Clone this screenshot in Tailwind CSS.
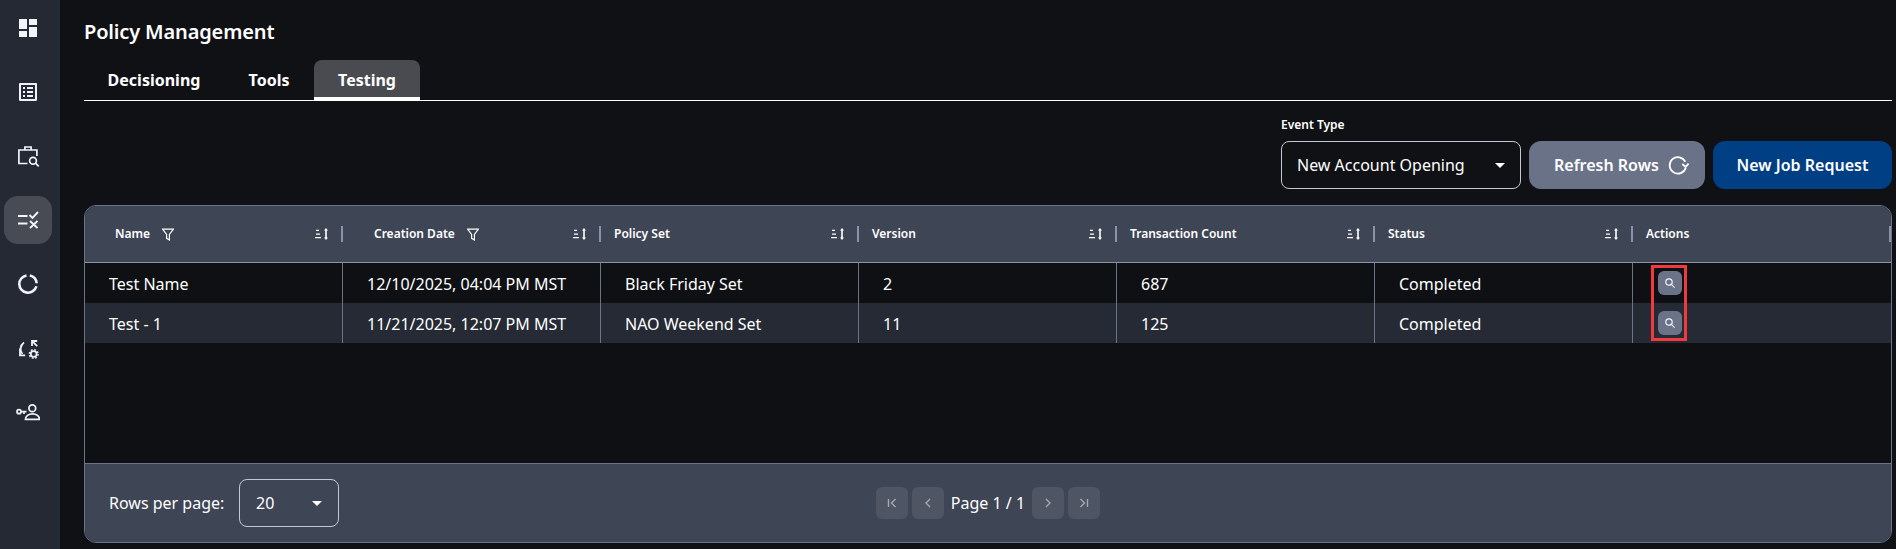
<!DOCTYPE html>
<html lang="en">

<head>
    <meta charset="UTF-8">
    <meta name="viewport" content="width=device-width, initial-scale=1.0">
    <title>Policy Management</title>
    <script src="https://cdn.jsdelivr.net/npm/@tailwindcss/browser@4"></script>
</head>

<body class="bg-[#101115] text-white font-['Noto_Sans',sans-serif] overflow-hidden">
    <div class="flex h-[549px]">
        <!-- Sidebar -->
        <nav class="w-[60px] shrink-0 bg-[#252934] flex flex-col gap-4 pt-1 pl-1">
            <div class="w-12 h-12 flex items-center justify-center">
                <svg class="w-6 h-6" viewBox="0 0 24 24" fill="#f1f3fa"><path d="M3 13h8V3H3v10zm0 8h8v-6H3v6zm10 0h8V11h-8v10zm0-18v6h8V3h-8z"/></svg>
            </div>
            <div class="w-12 h-12 flex items-center justify-center">
                <svg class="w-6 h-6" viewBox="0 0 24 24" fill="#f1f3fa"><path d="M19 5v14H5V5h14m1.1-2H3.9c-.5 0-.9.4-.9.9v16.2c0 .4.4.9.9.9h16.2c.4 0 .9-.5.9-.9V3.9c0-.5-.5-.9-.9-.9zM11 7h6v2h-6V7zm0 4h6v2h-6v-2zm0 4h6v2h-6zM7 7h2v2H7zm0 4h2v2H7zm0 4h2v2H7z"/></svg>
            </div>
            <div class="w-12 h-12 flex items-center justify-center">
                <svg class="w-6 h-6" viewBox="0 0 24 24" fill="none" stroke="#f1f3fa" stroke-width="1.7"><path d="M11.5 19.5H2.9V6h18v6M8.9 6V3h6.2v3"/><circle cx="17" cy="16.7" r="3.4"/><path d="M19.5 19.2l3.2 3.2"/></svg>
            </div>
            <div class="w-12 h-12 rounded-[14px] bg-[#494b54] flex items-center justify-center">
                <svg class="w-6 h-6" viewBox="0 0 24 24" fill="none" stroke="#f1f3fa" stroke-width="2"><path d="M2 8h9.5M2 15.5h9.5"/><path d="M13.5 7l3 3 5.5-6M14 13l7.5 7M21.5 13L14 20" stroke-width="1.9"/></svg>
            </div>
            <div class="w-12 h-12 flex items-center justify-center">
                <svg class="w-6 h-6" viewBox="0 0 24 24" fill="none" stroke="#f1f3fa" stroke-width="2.6"><path d="M10.49 3.43A8.7 8.7 0 1 0 20.4 14.25"/><path d="M13.81 3.49A8.7 8.7 0 0 1 20.67 11.24"/></svg>
            </div>
            <div class="w-12 h-12 flex items-center justify-center">
                <svg class="w-6 h-6" viewBox="0 0 24 24" fill="none" stroke="#f1f3fa" stroke-width="1.8"><path d="M8 6.5C4 9.5 3.5 14.5 6.5 18"/><path d="M4 12.5v6.8h5.2"/><path d="M16 10V5h5.2M16.2 5.2l5 5"/><circle cx="17.7" cy="18" r="2.9" stroke-width="1.7"/><circle cx="17.7" cy="18" r="4.4" stroke-width="1.4" stroke-dasharray="1.8 1.65"/></svg>
            </div>
            <div class="w-12 h-12 flex items-center justify-center">
                <svg class="w-6 h-6" viewBox="0 0 24 24" fill="none" stroke="#f1f3fa" stroke-width="1.7"><circle cx="16.3" cy="8.3" r="3.4"/><path d="M9.5 19.3c0-3 3-5.5 7-5.5s7 2.5 7 5.5z"/><circle cx="3" cy="11.7" r="2"/><path d="M5 11.7h5.5M8 11.7v2.3"/></svg>
            </div>
        </nav>

        <!-- Main -->
        <main class="flex-1 min-w-0 pl-6 pr-1">
            <h1 class="h-[60px] pt-[18px] text-[20px] leading-7 font-semibold tracking-[-0.15px]">Policy Management</h1>

            <!-- Tabs -->
            <div class="flex h-[41px] border-b border-white">
                <div class="w-[140px] h-10 flex items-center justify-center font-bold text-base">Decisioning</div>
                <div class="w-[90px] h-10 flex items-center justify-center font-bold text-base">Tools</div>
                <div class="w-[106px] h-10 pt-[3px] flex items-center justify-center font-bold text-base bg-[#4a4b50] rounded-t-lg border-b-[3px] border-white">Testing</div>
            </div>

            <!-- Toolbar -->
            <div class="flex justify-end items-end gap-2 h-10">
                <div class="w-[240px] text-xs font-semibold leading-4 pb-2">Event Type</div>
                <div class="w-[176px]"></div>
                <div class="w-[179px]"></div>
            </div>
            <div class="flex justify-end gap-2 h-12">
                <div class="w-[240px] rounded-lg border border-[#c3c8d6] flex items-center justify-between pl-[15px] pr-[15px]">
                    <span class="text-base">New Account Opening</span>
                    <svg class="w-[10px] h-[5px]" viewBox="0 0 10 5" fill="#fff"><path d="M0 0h10L5 5z"/></svg>
                </div>
                <button class="w-[176px] rounded-xl bg-[#6a7288] flex items-center pl-[25px] gap-2 font-semibold text-base">
                    Refresh Rows
                    <svg class="w-[22px] h-[22px]" viewBox="0 0 24 24" fill="none" stroke="#fff" stroke-width="1.9"><path d="M20 8.5A9 9 0 1 0 20.5 15"/><path d="M23.5 10.5l-3.2 3.6-3.6-3.2" /></svg>
                </button>
                <button class="w-[179px] rounded-xl bg-[#003f84] font-semibold text-base">New Job Request</button>
            </div>

            <!-- Table -->
            <div class="mt-4 h-[338px] flex flex-col rounded-xl border border-[#6b7389] overflow-hidden bg-[#0e1014]">
                <!-- Header -->
                <div class="grid grid-cols-[258px_258px_258px_258px_258px_258px_1fr] h-[57px] shrink-0 bg-[#3e4555] border-b border-[#8a93a9] text-xs font-semibold">
                    <div class="flex items-center pl-[30px]">
                        <span>Name</span>
                        <svg class="w-3 h-[13px] ml-3" viewBox="0 0 11 12" fill="none" stroke="#fff" stroke-width="1.1"><path d="M.5 1h10L6.8 6v5L4.2 9.5V6z"/></svg>
                        <svg class="w-[13px] h-3 ml-auto mr-[13px]" viewBox="0 0 13 12" fill="#fff"><path d="M1 1.8h3v1.3H1zM1 5.4h4v1.3H1zM0 9h6v1.3H0zM10.2 2.5h1.6v7h-1.6zM11 0l2 2.6H9zM11 12l-2-2.6h4z"/></svg>
                        <span class="w-0.5 h-4 bg-[#8a93a9]"></span>
                    </div>
                    <div class="flex items-center pl-[31px]">
                        <span>Creation Date</span>
                        <svg class="w-3 h-[13px] ml-3" viewBox="0 0 11 12" fill="none" stroke="#fff" stroke-width="1.1"><path d="M.5 1h10L6.8 6v5L4.2 9.5V6z"/></svg>
                        <svg class="w-[13px] h-3 ml-auto mr-[13px]" viewBox="0 0 13 12" fill="#fff"><path d="M1 1.8h3v1.3H1zM1 5.4h4v1.3H1zM0 9h6v1.3H0zM10.2 2.5h1.6v7h-1.6zM11 0l2 2.6H9zM11 12l-2-2.6h4z"/></svg>
                        <span class="w-0.5 h-4 bg-[#8a93a9]"></span>
                    </div>
                    <div class="flex items-center pl-[13px]">
                        <span>Policy Set</span>
                        <svg class="w-[13px] h-3 ml-auto mr-[13px]" viewBox="0 0 13 12" fill="#fff"><path d="M1 1.8h3v1.3H1zM1 5.4h4v1.3H1zM0 9h6v1.3H0zM10.2 2.5h1.6v7h-1.6zM11 0l2 2.6H9zM11 12l-2-2.6h4z"/></svg>
                        <span class="w-0.5 h-4 bg-[#8a93a9]"></span>
                    </div>
                    <div class="flex items-center pl-[13px]">
                        <span>Version</span>
                        <svg class="w-[13px] h-3 ml-auto mr-[13px]" viewBox="0 0 13 12" fill="#fff"><path d="M1 1.8h3v1.3H1zM1 5.4h4v1.3H1zM0 9h6v1.3H0zM10.2 2.5h1.6v7h-1.6zM11 0l2 2.6H9zM11 12l-2-2.6h4z"/></svg>
                        <span class="w-0.5 h-4 bg-[#8a93a9]"></span>
                    </div>
                    <div class="flex items-center pl-[13px]">
                        <span>Transaction Count</span>
                        <svg class="w-[13px] h-3 ml-auto mr-[13px]" viewBox="0 0 13 12" fill="#fff"><path d="M1 1.8h3v1.3H1zM1 5.4h4v1.3H1zM0 9h6v1.3H0zM10.2 2.5h1.6v7h-1.6zM11 0l2 2.6H9zM11 12l-2-2.6h4z"/></svg>
                        <span class="w-0.5 h-4 bg-[#8a93a9]"></span>
                    </div>
                    <div class="flex items-center pl-[13px]">
                        <span>Status</span>
                        <svg class="w-[13px] h-3 ml-auto mr-[13px]" viewBox="0 0 13 12" fill="#fff"><path d="M1 1.8h3v1.3H1zM1 5.4h4v1.3H1zM0 9h6v1.3H0zM10.2 2.5h1.6v7h-1.6zM11 0l2 2.6H9zM11 12l-2-2.6h4z"/></svg>
                        <span class="w-0.5 h-4 bg-[#8a93a9]"></span>
                    </div>
                    <div class="flex items-center justify-between pl-[13px]">
                        <span>Actions</span>
                        <span class="w-0.5 h-4 bg-[#8a93a9]"></span>
                    </div>
                </div>

                <!-- Rows -->
                <div class="relative flex-1">
                    <div class="grid grid-cols-[258px_258px_258px_258px_258px_258px_1fr] h-10 items-stretch text-base">
                        <div class="flex items-center pl-6 pt-px border-r border-[#6b7389]">Test Name</div>
                        <div class="flex items-center pl-6 pt-px border-r border-[#6b7389]">12/10/2025, 04:04 PM MST</div>
                        <div class="flex items-center pl-6 pt-px border-r border-[#6b7389]">Black Friday Set</div>
                        <div class="flex items-center pl-6 pt-px border-r border-[#6b7389]">2</div>
                        <div class="flex items-center pl-6 pt-px border-r border-[#6b7389]">687</div>
                        <div class="flex items-center pl-6 pt-px border-r border-[#6b7389]">Completed</div>
                        <div class="flex items-center pl-[25px]">
                            <button class="w-6 h-6 rounded-md bg-[#6b7389] flex items-center justify-center">
                                <svg class="w-3 h-3" viewBox="0 0 12 12" fill="none" stroke="#f1f3fa" stroke-width="1.2"><circle cx="5" cy="5" r="3.2"/><path d="M7.4 7.4l3.2 3.2"/></svg>
                            </button>
                        </div>
                    </div>
                    <div class="grid grid-cols-[258px_258px_258px_258px_258px_258px_1fr] h-10 items-stretch text-base bg-[#252a34]">
                        <div class="flex items-center pl-6 pt-px border-r border-[#6b7389]">Test - 1</div>
                        <div class="flex items-center pl-6 pt-px border-r border-[#6b7389]">11/21/2025, 12:07 PM MST</div>
                        <div class="flex items-center pl-6 pt-px border-r border-[#6b7389]">NAO Weekend Set</div>
                        <div class="flex items-center pl-6 pt-px border-r border-[#6b7389]">11</div>
                        <div class="flex items-center pl-6 pt-px border-r border-[#6b7389]">125</div>
                        <div class="flex items-center pl-6 pt-px border-r border-[#6b7389]">Completed</div>
                        <div class="flex items-center pl-[25px]">
                            <button class="w-6 h-6 rounded-md bg-[#6b7389] flex items-center justify-center">
                                <svg class="w-3 h-3" viewBox="0 0 12 12" fill="none" stroke="#f1f3fa" stroke-width="1.2"><circle cx="5" cy="5" r="3.2"/><path d="M7.4 7.4l3.2 3.2"/></svg>
                            </button>
                        </div>
                    </div>
                    <!-- red highlight drawn over the action buttons -->
                    <div class="absolute left-[1566px] top-[2px] w-[36px] h-[76px] border-[3px] border-[#f03a3e]"></div>
                </div>

                <!-- Footer -->
                <div class="relative h-[79px] shrink-0 bg-[#3e4555] border-t border-[#6b7389] flex items-center pl-6">
                    <span class="text-base w-[130px]">Rows per page:</span>
                    <div class="w-[100px] h-12 rounded-lg border border-[#c3c8d6] flex items-center justify-between pl-4 pr-4">
                        <span class="text-base">20</span>
                        <svg class="w-[10px] h-[5px]" viewBox="0 0 10 5" fill="#fff"><path d="M0 0h10L5 5z"/></svg>
                    </div>
                    <div class="absolute left-[791px] top-[23px] flex items-center gap-1">
                        <div class="w-8 h-8 rounded-md bg-[#4f5563] flex items-center justify-center">
                            <svg class="w-4 h-4" viewBox="0 0 16 16" fill="none" stroke="#a2a8b6" stroke-width="1.4"><path d="M4.5 4v8M11.5 4l-4 4 4 4"/></svg>
                        </div>
                        <div class="w-8 h-8 rounded-md bg-[#4f5563] flex items-center justify-center">
                            <svg class="w-4 h-4" viewBox="0 0 16 16" fill="none" stroke="#a2a8b6" stroke-width="1.4"><path d="M10 4L6 8l4 4"/></svg>
                        </div>
                        <span class="w-[80px] text-center text-base whitespace-nowrap">Page 1 / 1</span>
                        <div class="w-8 h-8 rounded-md bg-[#4f5563] flex items-center justify-center">
                            <svg class="w-4 h-4" viewBox="0 0 16 16" fill="none" stroke="#a2a8b6" stroke-width="1.4"><path d="M6 4l4 4-4 4"/></svg>
                        </div>
                        <div class="w-8 h-8 rounded-md bg-[#4f5563] flex items-center justify-center">
                            <svg class="w-4 h-4" viewBox="0 0 16 16" fill="none" stroke="#a2a8b6" stroke-width="1.4"><path d="M4.5 4l4 4-4 4M11.5 4v8"/></svg>
                        </div>
                    </div>
                </div>
            </div>
        </main>
    </div>
</body>

</html>
